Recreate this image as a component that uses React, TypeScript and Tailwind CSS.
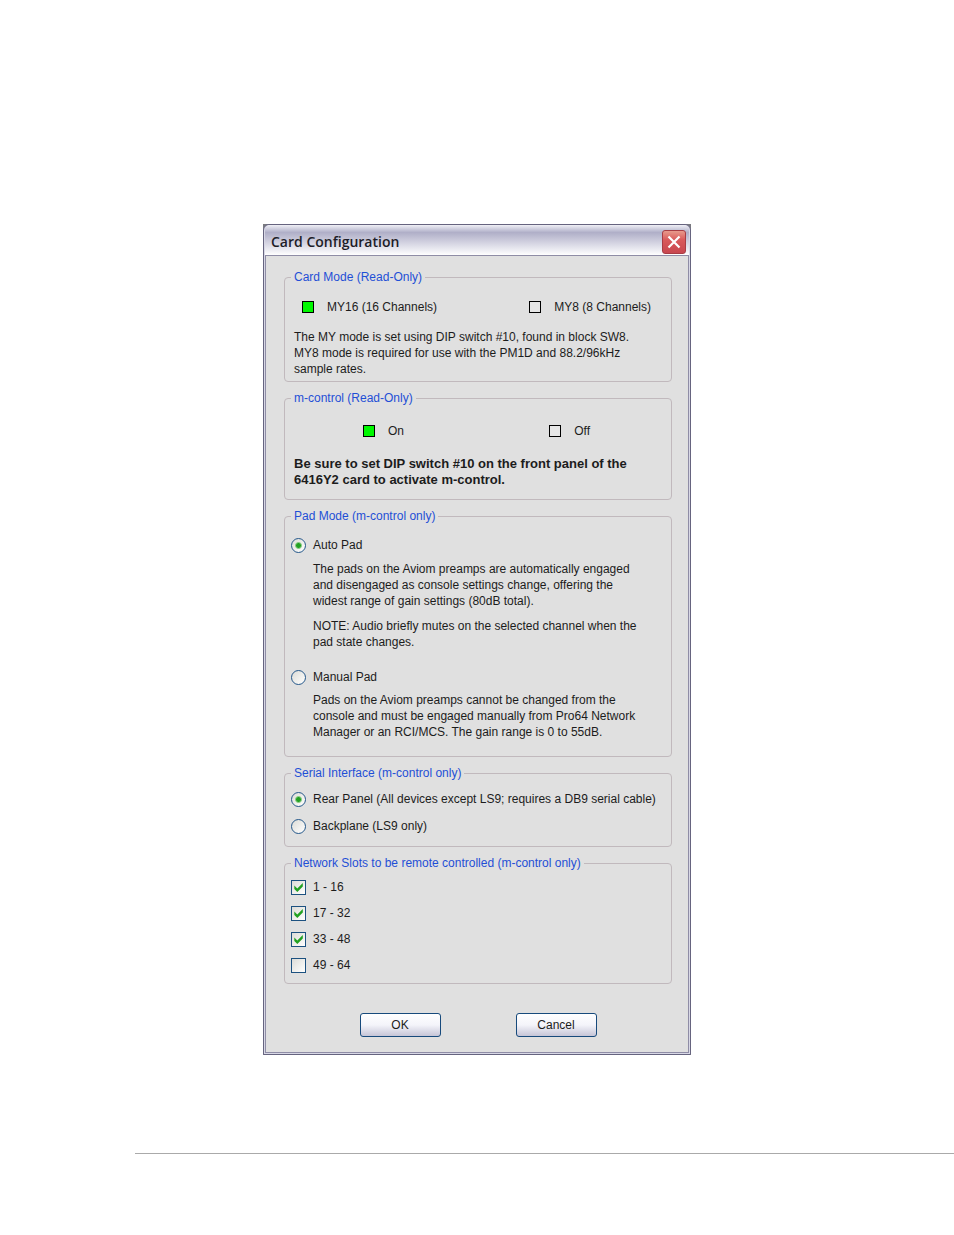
import { useState } from 'react';

type RadioProps = {
  name: string;
  label: string;
  checked: boolean;
  onChange: () => void;
};

type GroupProps = {
  title: string;
  className: string;
  children: React.ReactNode;
};

const slotNames = ['1 - 16', '17 - 32', '33 - 48', '49 - 64'];

const Group = ({ title, className, children }: GroupProps) => (
  <fieldset className="rounded-[4px] border border-[#c1b9bd] px-[6px]">
    <legend className="px-[3px] text-[#1f4fd6]">{title}</legend>
    <div className={className}>{children}</div>
  </fieldset>
);

const Indicator = ({ label, on }: { label: string; on: boolean }) => (
  <div className="flex items-center gap-[13px]">
    <span
      className={
        on
          ? 'size-[12px] border border-black bg-[#00f800]'
          : 'size-[12px] border border-black bg-[#e6e6e6]'
      }
    />
    <span>{label}</span>
  </div>
);

const Radio = ({ name, label, checked, onChange }: RadioProps) => (
  <label className="flex items-center gap-[7px]">
    <span className="grid size-[15px] place-items-center">
      <input
        type="radio"
        name={name}
        checked={checked}
        onChange={onChange}
        className="col-start-1 row-start-1 size-[15px] appearance-none rounded-full border border-[#24578a] bg-linear-to-br from-[#dcdcd7] to-white"
      />
      {checked && (
        <span className="pointer-events-none z-10 col-start-1 row-start-1 size-[7px] rounded-full border border-[#8fd08b] bg-[#22a022]" />
      )}
    </span>
    {label}
  </label>
);

const App = () => {
  const [pad, setPad] = useState('auto');
  const [serial, setSerial] = useState('rear');
  const [slots, setSlots] = useState([true, true, true, false]);

  const toggleSlot = (index: number) => {
    setSlots(slots.map((slot, i) => (i === index ? !slot : slot)));
  };

  return (
    <main className="min-h-screen bg-white pt-56 font-['Liberation_Sans',Arial,sans-serif] text-[12px] leading-4 text-[#1c1c1c]">
      <div className="mx-auto max-w-[428px] bg-[#7a7a80]">
        <section
          aria-labelledby="dialog-title"
          className="rounded-t-[6px] border border-[#66647f] bg-[#d8d8e6] px-px pb-px"
        >
          <header className="flex h-[30px] items-center justify-between rounded-t-[5px] bg-linear-to-b from-[#f0f0f6] via-[#b0afc8] via-25% to-white pr-[3px] pl-[6px]">
            <h1
              id="dialog-title"
              className="pt-[3px] font-['Open_Sans',sans-serif] text-[14px] leading-5 font-semibold text-[#1d1d28]"
            >
              Card Configuration
            </h1>
            <button
              aria-label="Close"
              className="mt-[3px] grid size-[24px] place-items-center rounded-[3px] border border-[#a83c44] bg-linear-to-b from-[#e89a8c] via-[#d9595b] via-40% to-[#c8474f]"
            >
              <svg width="14" height="14" viewBox="0 0 14 14">
                <path
                  d="M1.5 1.5 12.5 12.5M12.5 1.5 1.5 12.5"
                  stroke="white"
                  strokeWidth="2.2"
                />
              </svg>
            </button>
          </header>

          <div className="border border-[#8f8da6] bg-[#e0e0e0] pt-[13px] pr-[16px] pb-[15px] pl-[18px]">
            <div className="flex flex-col gap-2">
              <Group title="Card Mode (Read-Only)" className="px-[3px] pt-[14px] pb-[4px]">
                <div className="flex justify-between pr-[11px] pl-2">
                  <Indicator label="MY16 (16 Channels)" on={true} />
                  <Indicator label="MY8 (8 Channels)" on={false} />
                </div>
                <p className="mt-[14px]">
                  The MY mode is set using DIP switch #10, found in block SW8.
                  <br />
                  MY8 mode is required for use with the PM1D and 88.2/96kHz
                  <br />
                  sample rates.
                </p>
              </Group>

              <Group title="m-control (Read-Only)" className="px-[3px] pt-[17px] pb-[11px]">
                <div className="flex justify-between pr-[72px] pl-[69px]">
                  <Indicator label="On" on={true} />
                  <Indicator label="Off" on={false} />
                </div>
                <p className="mt-[17px] text-[13px] leading-4 font-bold">
                  Be sure to set DIP switch #10 on the front panel of the
                  <br />
                  6416Y2 card to activate m-control.
                </p>
              </Group>

              <Group title="Pad Mode (m-control only)" className="pt-[13px] pb-[16px]">
                <Radio
                  name="pad"
                  label="Auto Pad"
                  checked={pad === 'auto'}
                  onChange={() => setPad('auto')}
                />
                <p className="mt-2 pl-[22px]">
                  The pads on the Aviom preamps are automatically engaged
                  <br />
                  and disengaged as console settings change, offering the
                  <br />
                  widest range of gain settings (80dB total).
                </p>
                <p className="mt-[9px] pl-[22px]">
                  NOTE: Audio briefly mutes on the selected channel when the
                  <br />
                  pad state changes.
                </p>
                <div className="mt-[19px]">
                  <Radio
                    name="pad"
                    label="Manual Pad"
                    checked={pad === 'manual'}
                    onChange={() => setPad('manual')}
                  />
                </div>
                <p className="mt-[7px] pl-[22px]">
                  Pads on the Aviom preamps cannot be changed from the
                  <br />
                  console and must be engaged manually from Pro64 Network
                  <br />
                  Manager or an RCI/MCS. The gain range is 0 to 55dB.
                </p>
              </Group>

              <Group
                title="Serial Interface (m-control only)"
                className="flex flex-col gap-[11px] pt-[10px] pb-[12px]"
              >
                <Radio
                  name="serial"
                  label="Rear Panel (All devices except LS9; requires a DB9 serial cable)"
                  checked={serial === 'rear'}
                  onChange={() => setSerial('rear')}
                />
                <Radio
                  name="serial"
                  label="Backplane (LS9 only)"
                  checked={serial === 'backplane'}
                  onChange={() => setSerial('backplane')}
                />
              </Group>

              <Group
                title="Network Slots to be remote controlled (m-control only)"
                className="flex flex-col gap-[10px] pt-[8px] pb-[10px]"
              >
                {slotNames.map((slotName, index) => (
                  <label key={slotName} className="flex items-center gap-[7px]">
                    <span className="grid size-[15px] place-items-center">
                      <input
                        type="checkbox"
                        checked={slots[index]}
                        onChange={() => toggleSlot(index)}
                        className="col-start-1 row-start-1 size-[15px] appearance-none border border-[#1c5180] bg-linear-to-br from-[#dcdcd7] to-white"
                      />
                      {slots[index] && (
                        <svg
                          width="9"
                          height="9"
                          viewBox="0 0 9 9"
                          className="pointer-events-none z-10 col-start-1 row-start-1"
                        >
                          <path
                            d="M0.3 2.6V5.9L3.3 8.9 8.8 3.4V0.1L3.3 5.6Z"
                            fill="#21a121"
                          />
                        </svg>
                      )}
                    </span>
                    {slotName}
                  </label>
                ))}
              </Group>
            </div>

            <div className="mt-[29px] flex justify-center gap-[75px]">
              <button className="h-6 w-[81px] rounded-[3px] border border-[#174a7c] bg-linear-to-b from-white via-[#f4f4fa] via-50% to-[#c6c5d7]">
                OK
              </button>
              <button className="h-6 w-[81px] rounded-[3px] border border-[#174a7c] bg-linear-to-b from-white via-[#f4f4fa] via-50% to-[#c6c5d7]">
                Cancel
              </button>
            </div>
          </div>
        </section>
      </div>
      <hr className="mt-[98px] ml-[135px] border-[#aaaaaa]" />
    </main>
  );
};

export default App;
